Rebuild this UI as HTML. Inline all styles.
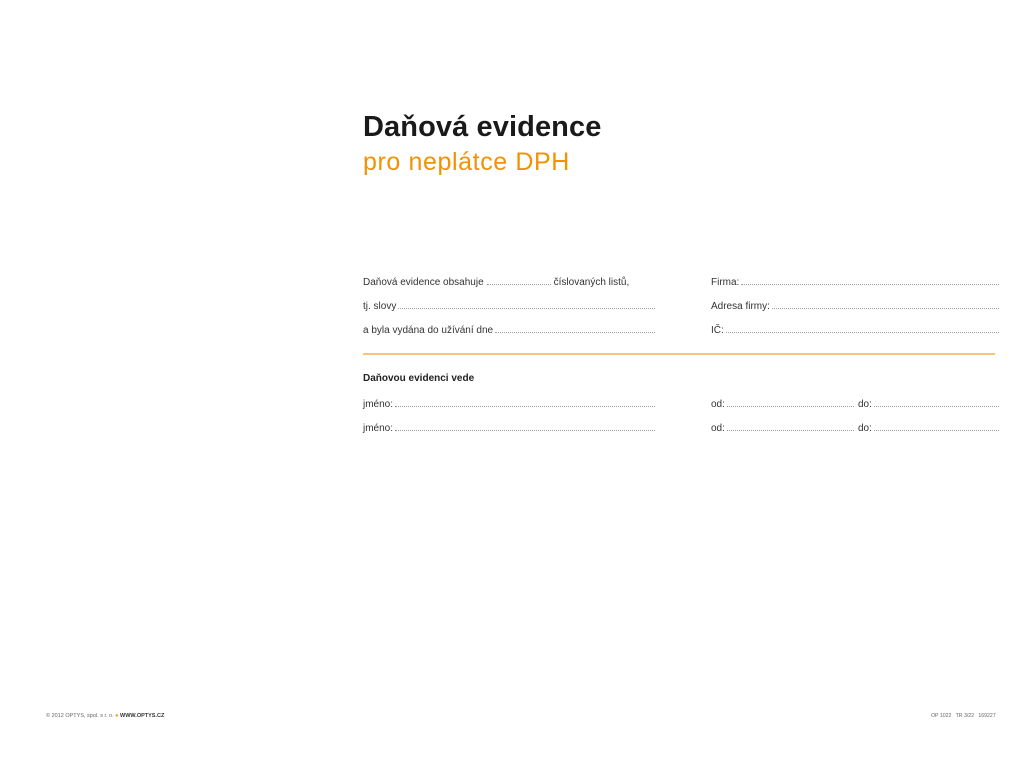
<!DOCTYPE html>
<html><head><meta charset="utf-8"><style>
body{margin:0;width:1024px;height:768px;background:#fff;position:relative;font-family:"Liberation Sans",sans-serif;color:#222;overflow:hidden}
.a{position:absolute;white-space:nowrap}
.t1{left:363px;top:111px;font-size:29px;font-weight:bold;letter-spacing:0.1px;color:#1a1a1a}
.t2{left:363px;top:148px;font-size:25px;color:#f39200;letter-spacing:0.6px}
.row{position:absolute;display:flex;align-items:baseline;font-size:10px;height:14px;color:#333}
.dots{flex:1;border-bottom:1px dotted #999;height:9px;margin-left:2px}
.line{position:absolute;left:363px;top:353px;width:632px;height:2px;background:#f8c478}
</style></head><body>
<div class="a t1">Daňová evidence</div>
<div class="a t2">pro neplátce DPH</div>

<div class="row" style="left:363px;top:275px;width:292px">Daňová evidence obsahuje <span style="width:64px;border-bottom:1px dotted #999;height:9px;margin:0 3px"></span>číslovaných listů,</div>
<div class="row" style="left:363px;top:299px;width:292px">tj. slovy<span class="dots"></span></div>
<div class="row" style="left:363px;top:323px;width:292px">a byla vydána do užívání dne<span class="dots"></span></div>

<div class="row" style="left:711px;top:275px;width:288px">Firma:<span class="dots"></span></div>
<div class="row" style="left:711px;top:299px;width:288px">Adresa firmy:<span class="dots"></span></div>
<div class="row" style="left:711px;top:323px;width:288px">IČ:<span class="dots"></span></div>

<div class="line"></div>

<div class="row" style="left:363px;top:373px;font-weight:bold;color:#222">Daňovou evidenci vede</div>
<div class="row" style="left:363px;top:397px;width:292px">jméno:<span class="dots"></span></div>
<div class="row" style="left:363px;top:421px;width:292px">jméno:<span class="dots"></span></div>

<div class="row" style="left:711px;top:397px;width:143px">od:<span class="dots"></span></div>
<div class="row" style="left:858px;top:397px;width:141px">do:<span class="dots"></span></div>
<div class="row" style="left:711px;top:421px;width:143px">od:<span class="dots"></span></div>
<div class="row" style="left:858px;top:421px;width:141px">do:<span class="dots"></span></div>

<div class="a" style="left:46px;top:713px;font-size:5.5px;color:#666">© 2012 OPTYS, spol. s r. o. <span style="color:#f39200">●</span> <b style="color:#333">WWW.OPTYS.CZ</b></div>
<div class="a" style="left:931px;top:713px;font-size:5.2px;color:#666">OP 1022 &nbsp; TR 3/22 &nbsp; 169227</div>
</body></html>
